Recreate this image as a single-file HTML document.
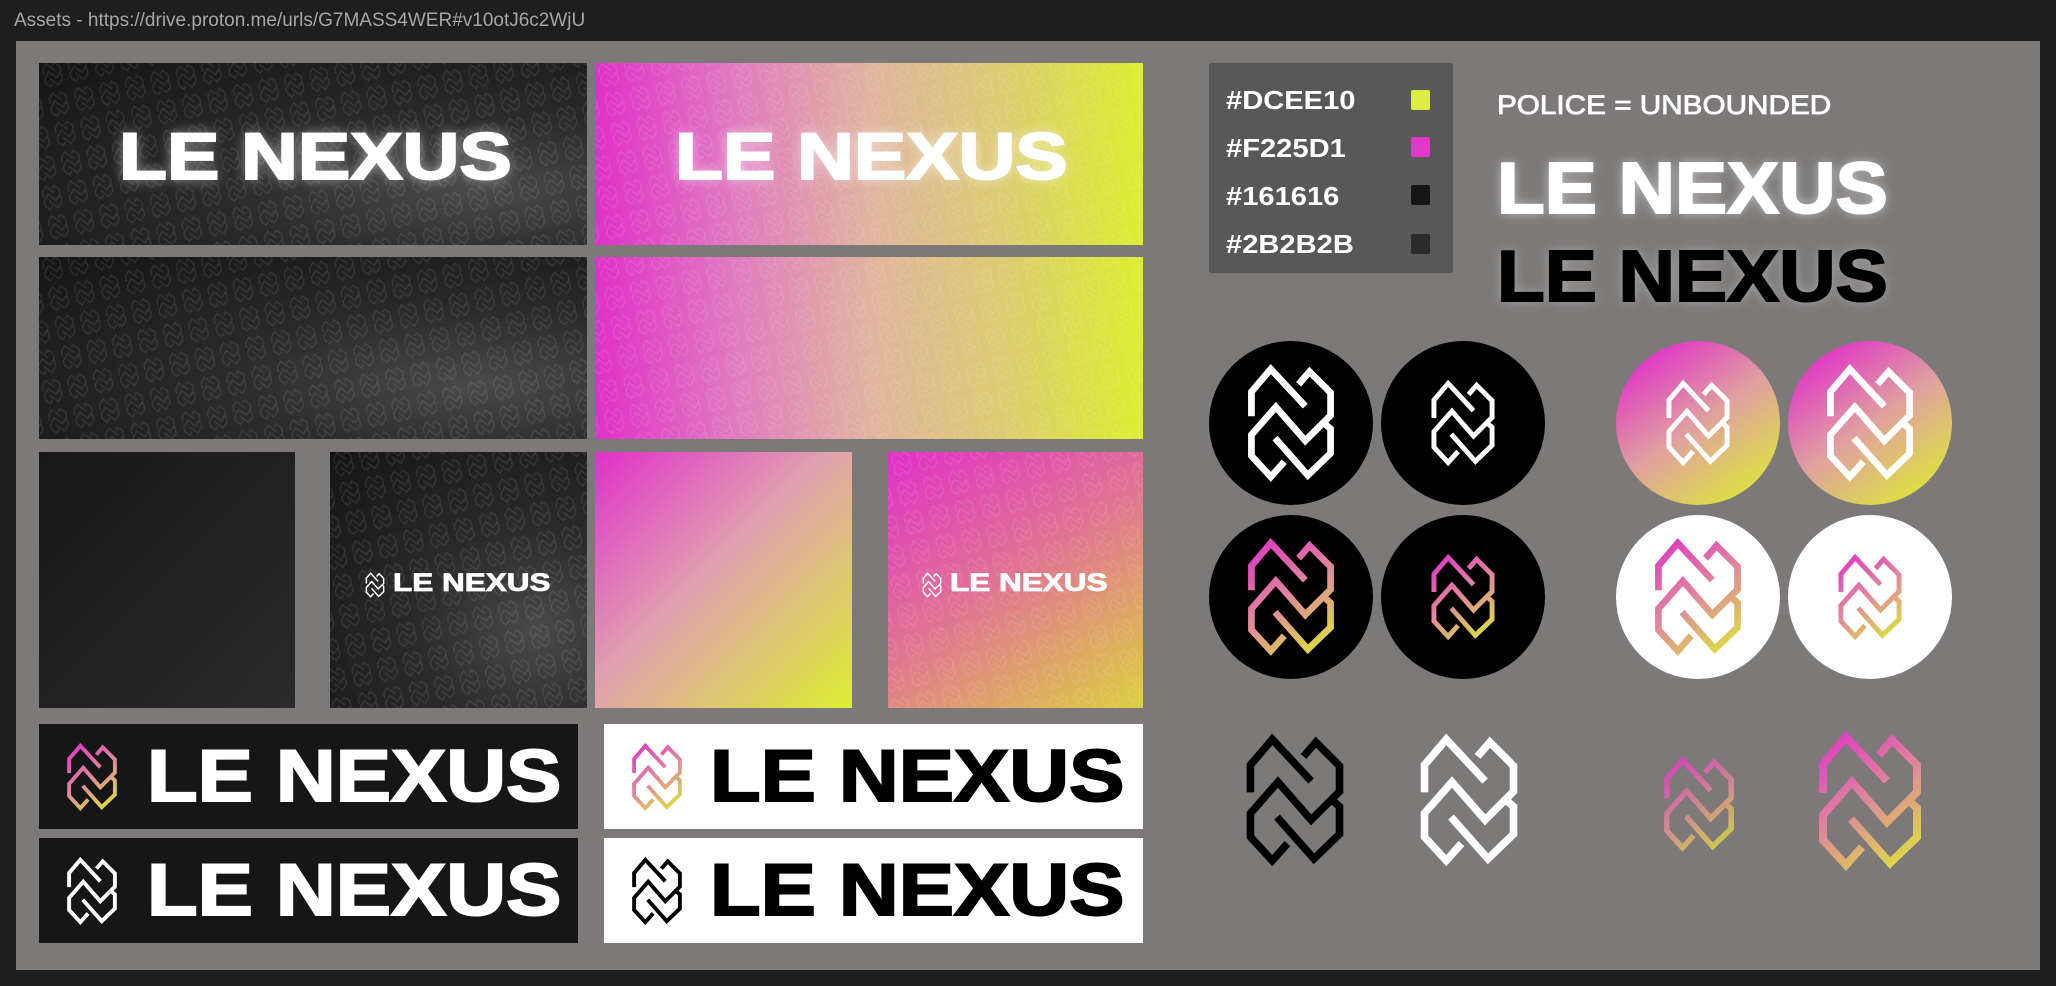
<!DOCTYPE html>
<html><head><meta charset="utf-8"><style>
*{margin:0;padding:0;box-sizing:border-box}
body{width:2056px;height:986px;background:#1e1e1e;position:relative;overflow:hidden;font-family:"Liberation Sans",sans-serif}
.a{position:absolute}
.t{font-weight:bold;white-space:nowrap;display:inline-block;transform-origin:0 50%}
.w{-webkit-text-stroke:2px currentColor}
.dk{background:radial-gradient(ellipse at 80% 70%,#4a4a4a 0%,#2b2b2b 40%,#141414 100%)}
.gr{background:linear-gradient(90deg,#e030c8 0%,#e07ac0 25%,#e0b4a0 50%,#dccd70 75%,#dcee30 100%)}
.pat{position:absolute;left:0;top:0;width:100%;height:100%}
</style></head><body>
<svg width="0" height="0" style="position:absolute">
<defs>
<linearGradient id="g" gradientUnits="userSpaceOnUse" x1="40" y1="22" x2="140" y2="160"><stop offset="0" stop-color="#e030c8"/><stop offset="0.5" stop-color="#e08a9a"/><stop offset="1" stop-color="#dcee30"/></linearGradient>
<symbol id="lg" viewBox="30 16 118 152"><g fill="none" stroke-width="8" stroke-linejoin="miter" stroke-linecap="butt">
<path d="M42 84V55L65 28L106 72"/>
<path d="M98 46L111 31L136 56V83L106 113L71 73L42 106V131L65 156L81 138"/>
<path d="M70 110L109 154L136 128V99L128 92"/>
</g></symbol>
<pattern id="p" width="26" height="30" patternUnits="userSpaceOnUse" patternTransform="rotate(-12)"><use href="#lg" width="22" height="28" stroke="rgba(255,255,255,0.09)"/></pattern>
</defs></svg>

<div class="a" style="left:14px;top:10px;color:#a6a6a6;font-size:19px">Assets - https://drive.proton.me/urls/G7MASS4WER#v10otJ6c2WjU</div>
<div class="a" style="left:16px;top:41px;width:2024px;height:929px;background:#7c7978"></div>

<div class="a dk" style="left:39px;top:63px;width:548px;height:182px"><svg class="pat"><rect width="100%" height="100%" fill="url(#p)"/></svg>
<div class="a" style="left:80px;top:55px"><span class="t w" style="font-size:66px;color:#fff;transform:scaleX(1.19);text-shadow:0 0 12px rgba(255,255,255,.6)">LE NEXUS</span></div></div>
<div class="a gr" style="left:595px;top:63px;width:548px;height:182px"><svg class="pat"><rect width="100%" height="100%" fill="url(#p)"/></svg>
<div class="a" style="left:80px;top:55px"><span class="t w" style="font-size:66px;color:#fff;transform:scaleX(1.19);text-shadow:0 0 12px rgba(255,255,255,.6)">LE NEXUS</span></div></div>
<div class="a dk" style="left:39px;top:257px;width:548px;height:182px"><svg class="pat"><rect width="100%" height="100%" fill="url(#p)"/></svg></div>
<div class="a gr" style="left:595px;top:257px;width:548px;height:182px"><svg class="pat"><rect width="100%" height="100%" fill="url(#p)"/></svg></div>

<div class="a" style="left:39px;top:452px;width:256px;height:256px;background:linear-gradient(135deg,#181818,#2a2a2a)"></div>
<div class="a dk" style="left:330px;top:452px;width:257px;height:256px"><svg class="pat"><rect width="100%" height="100%" fill="url(#p)"/></svg>
<svg class="a" style="left:34px;top:119px" width="22" height="28"><use href="#lg" width="22" height="28" stroke="#fff"/></svg>
<div class="a" style="left:63px;top:117px"><span class="t" style="font-size:25px;color:#fff;transform:scaleX(1.26);-webkit-text-stroke:.8px #fff">LE NEXUS</span></div></div>
<div class="a" style="left:595px;top:452px;width:257px;height:256px;background:linear-gradient(135deg,#e030c8 0%,#e0a0b0 45%,#dcee30 100%)"></div>
<div class="a" style="left:888px;top:452px;width:255px;height:256px;background:linear-gradient(145deg,#e030c8 0%,#e07890 50%,#dcd040 100%)"><svg class="pat"><rect width="100%" height="100%" fill="url(#p)"/></svg>
<svg class="a" style="left:33px;top:119px" width="22" height="28"><use href="#lg" width="22" height="28" stroke="#fff"/></svg>
<div class="a" style="left:62px;top:117px"><span class="t" style="font-size:25px;color:#fff;transform:scaleX(1.26);-webkit-text-stroke:.8px #fff">LE NEXUS</span></div></div>

<div class="a" style="left:39px;top:724px;width:539px;height:105px;background:#161616">
<svg class="a" style="left:22px;top:16px" width="62" height="74"><use href="#lg" width="62" height="74" stroke="url(#g)"/></svg>
<div class="a" style="left:108px;top:11px"><span class="t w" style="font-size:73px;color:#fff;transform:scaleX(1.135)">LE NEXUS</span></div></div>
<div class="a" style="left:39px;top:838px;width:539px;height:105px;background:#161616">
<svg class="a" style="left:22px;top:16px" width="62" height="74"><use href="#lg" width="62" height="74" stroke="#fff"/></svg>
<div class="a" style="left:108px;top:11px"><span class="t w" style="font-size:73px;color:#fff;transform:scaleX(1.135)">LE NEXUS</span></div></div>
<div class="a" style="left:604px;top:724px;width:539px;height:105px;background:#fff">
<svg class="a" style="left:22px;top:16px" width="62" height="74"><use href="#lg" width="62" height="74" stroke="url(#g)"/></svg>
<div class="a" style="left:106px;top:11px"><span class="t w" style="font-size:73px;color:#000;transform:scaleX(1.135)">LE NEXUS</span></div></div>
<div class="a" style="left:604px;top:838px;width:539px;height:105px;background:#fff">
<svg class="a" style="left:22px;top:16px" width="62" height="74"><use href="#lg" width="62" height="74" stroke="#000"/></svg>
<div class="a" style="left:106px;top:11px"><span class="t w" style="font-size:73px;color:#000;transform:scaleX(1.135)">LE NEXUS</span></div></div>

<div class="a" style="left:1209px;top:63px;width:244px;height:210px;background:#585858;border-radius:2px"></div>
<div class="a" style="left:1226px;top:76px;color:#fff;font-size:26px;line-height:48px;font-weight:bold">
<div><span class="t" style="transform:scaleX(1.12)">#DCEE10</span></div>
<div><span class="t" style="transform:scaleX(1.12)">#F225D1</span></div>
<div><span class="t" style="transform:scaleX(1.12)">#161616</span></div>
<div><span class="t" style="transform:scaleX(1.12)">#2B2B2B</span></div></div>
<div class="a" style="left:1411px;top:90px;width:19px;height:20px;background:#dcee40;border-radius:2px"></div>
<div class="a" style="left:1411px;top:137px;width:19px;height:20px;background:#e038c8;border-radius:2px"></div>
<div class="a" style="left:1411px;top:185px;width:19px;height:20px;background:#161616;border-radius:2px"></div>
<div class="a" style="left:1411px;top:234px;width:19px;height:20px;background:#2b2b2b;border-radius:2px"></div>

<div class="a" style="left:1497px;top:90px"><span class="t" style="font-size:27px;color:#fff;transform:scaleX(1.1);font-weight:normal;-webkit-text-stroke:.8px #fff">POLICE = UNBOUNDED</span></div>
<div class="a" style="left:1497px;top:148px"><span class="t w" style="font-size:72px;color:#fff;transform:scaleX(1.085);text-shadow:0 0 12px rgba(255,255,255,.6)">LE NEXUS</span></div>
<div class="a" style="left:1497px;top:236px"><span class="t w" style="font-size:72px;color:#000;transform:scaleX(1.085);text-shadow:0 0 12px rgba(255,255,255,.4)">LE NEXUS</span></div>

<div class="a" style="left:1209px;top:341px;width:164px;height:164px;border-radius:50%;background:#000"><svg class="a" style="left:30px;top:18px" width="104" height="128"><use href="#lg" width="104" height="128" stroke="#fff"/></svg></div>
<div class="a" style="left:1381px;top:341px;width:164px;height:164px;border-radius:50%;background:#000"><svg class="a" style="left:44px;top:35px" width="76" height="94"><use href="#lg" width="76" height="94" stroke="#fff"/></svg></div>
<div class="a" style="left:1616px;top:341px;width:164px;height:164px;border-radius:50%;background:linear-gradient(145deg,#e030c8 10%,#e0a0a0 50%,#dcee30 95%)"><svg class="a" style="left:44px;top:35px" width="76" height="94"><use href="#lg" width="76" height="94" stroke="#fff"/></svg></div>
<div class="a" style="left:1788px;top:341px;width:164px;height:164px;border-radius:50%;background:linear-gradient(145deg,#e030c8 10%,#e0a0a0 50%,#dcee30 95%)"><svg class="a" style="left:30px;top:18px" width="104" height="128"><use href="#lg" width="104" height="128" stroke="#fff"/></svg></div>
<div class="a" style="left:1209px;top:515px;width:164px;height:164px;border-radius:50%;background:#000"><svg class="a" style="left:30px;top:18px" width="104" height="128"><use href="#lg" width="104" height="128" stroke="url(#g)"/></svg></div>
<div class="a" style="left:1381px;top:515px;width:164px;height:164px;border-radius:50%;background:#000"><svg class="a" style="left:44px;top:35px" width="76" height="94"><use href="#lg" width="76" height="94" stroke="url(#g)"/></svg></div>
<div class="a" style="left:1616px;top:515px;width:164px;height:164px;border-radius:50%;background:#fff"><svg class="a" style="left:30px;top:18px" width="104" height="128"><use href="#lg" width="104" height="128" stroke="url(#g)"/></svg></div>
<div class="a" style="left:1788px;top:515px;width:164px;height:164px;border-radius:50%;background:#fff"><svg class="a" style="left:44px;top:35px" width="76" height="94"><use href="#lg" width="76" height="94" stroke="url(#g)"/></svg></div>

<svg class="a" style="left:1236px;top:728px" width="118" height="144"><use href="#lg" width="118" height="144" stroke="#000"/></svg>
<svg class="a" style="left:1410px;top:728px" width="118" height="144"><use href="#lg" width="118" height="144" stroke="#fff"/></svg>
<svg class="a" style="left:1656px;top:752px" width="86" height="104"><use href="#lg" width="86" height="104" stroke="url(#g)" opacity="0.85"/></svg>
<svg class="a" style="left:1808px;top:725px" width="124" height="152"><use href="#lg" width="124" height="152" stroke="url(#g)"/></svg>
</body></html>
